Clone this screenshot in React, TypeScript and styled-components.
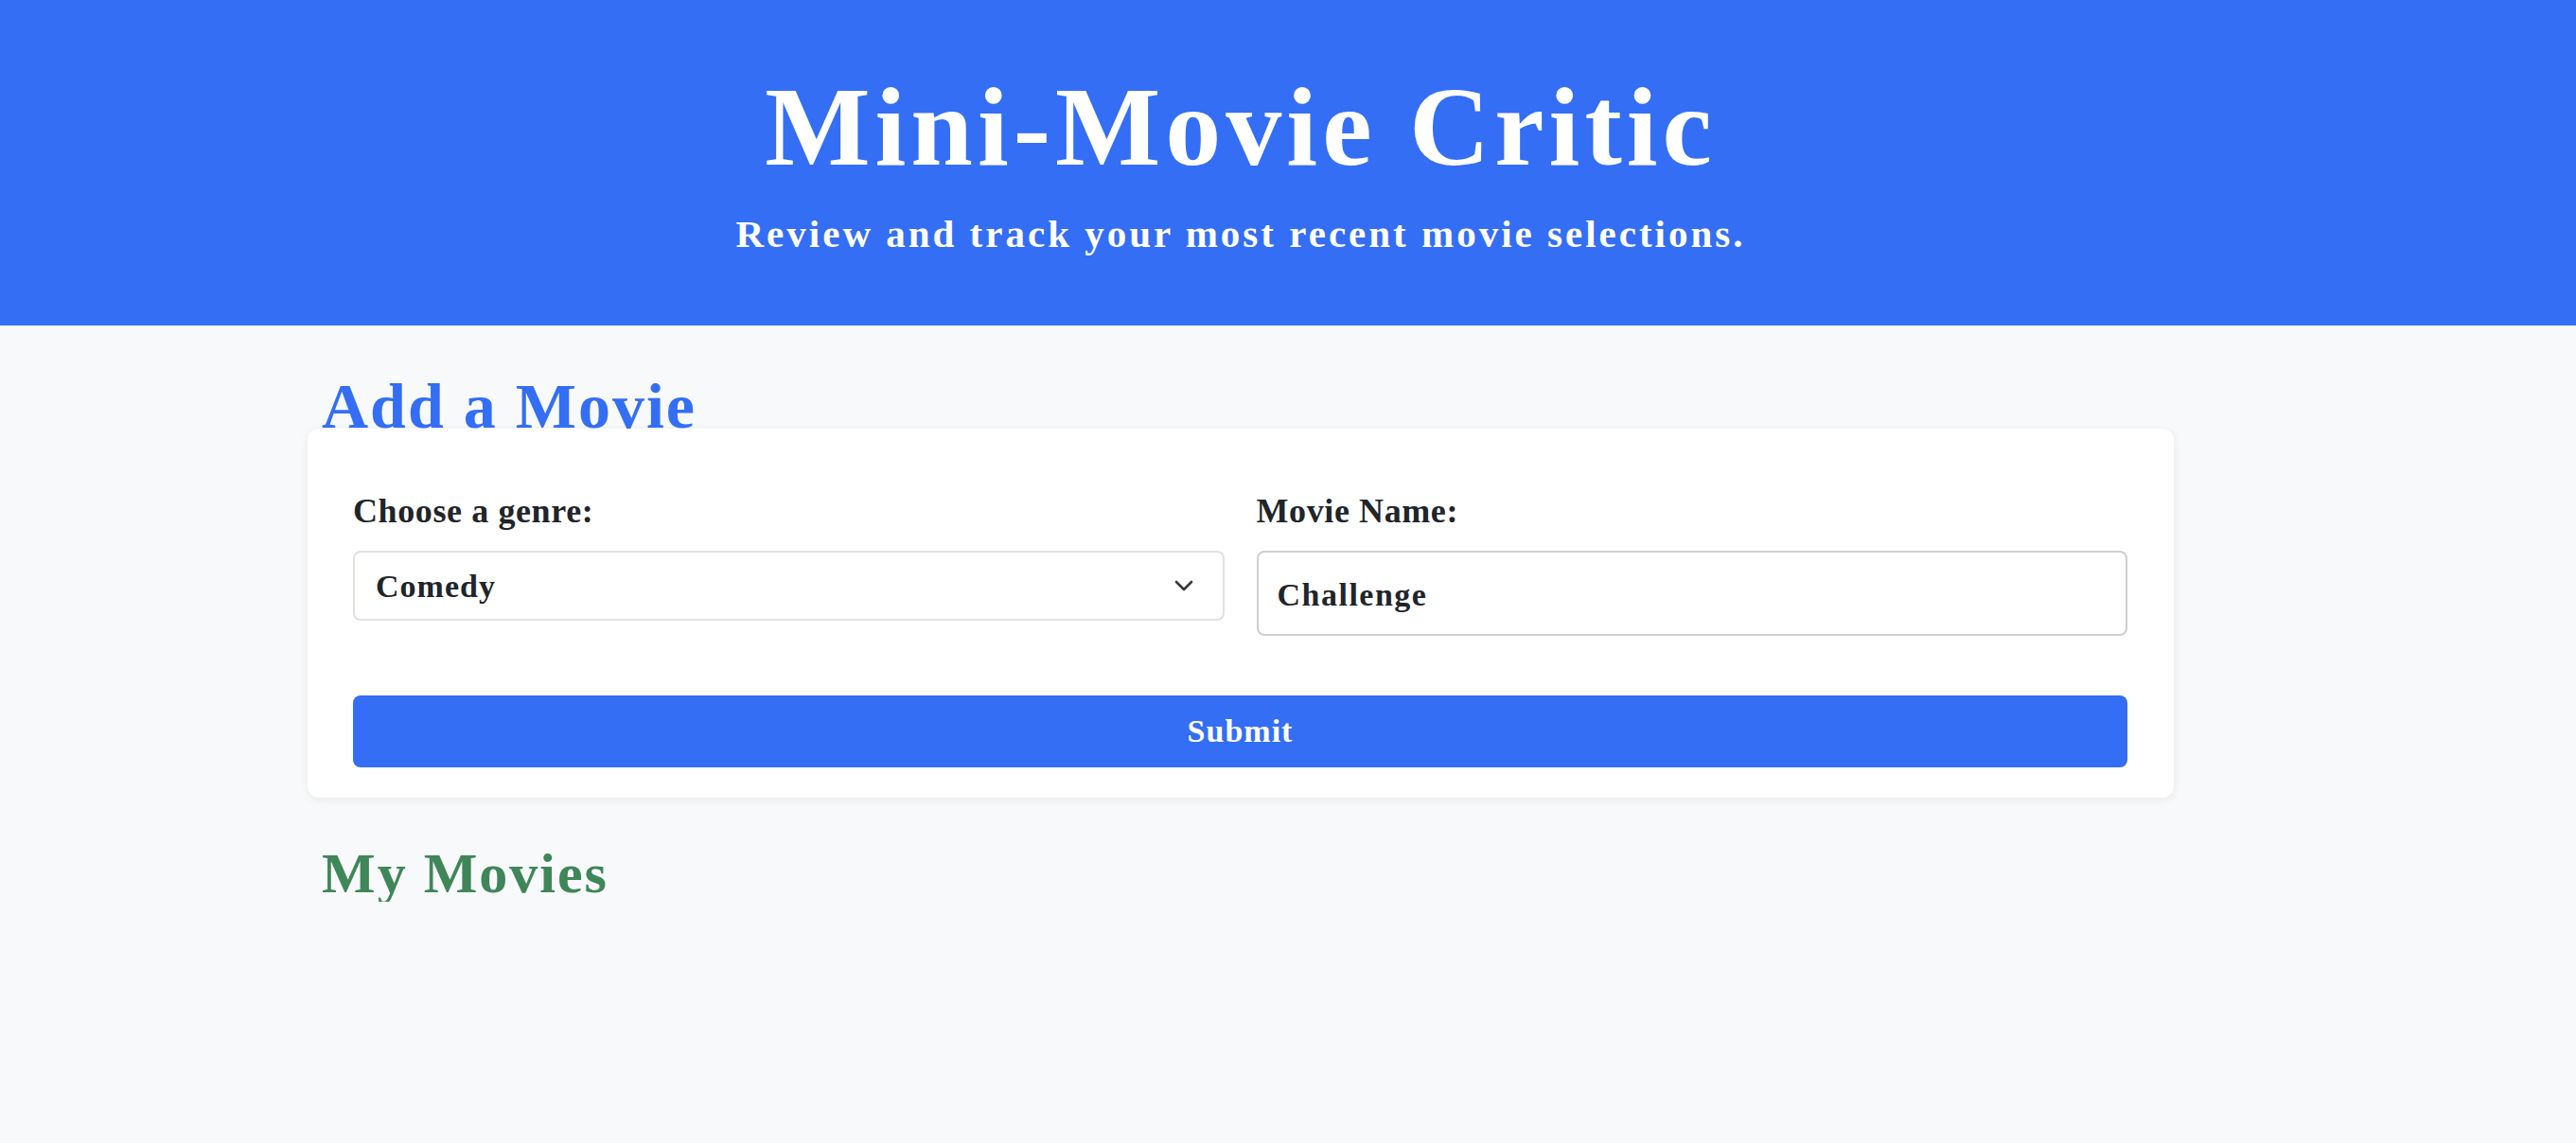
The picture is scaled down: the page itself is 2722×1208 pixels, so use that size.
import React, { useState } from "react";
import styled, { createGlobalStyle } from "styled-components";

const GlobalStyle = createGlobalStyle`
  html, body {
    margin: 0;
    padding: 0;
    background: #f8f9fa;
  }
  body {
    font-family: "Liberation Serif", "Times New Roman", serif;
    color: #212529;
  }
  * { box-sizing: border-box; }
`;

const Header = styled.header`
  background: #336ef5;
  height: 344px;
  padding: 76px 100px 0 0;
  text-align: center;
  color: #ffffff;
`;

const Title = styled.h1`
  margin: 0;
  font-size: 118px;
  line-height: 1;
  font-weight: 700;
  letter-spacing: 5px;
`;

const Subtitle = styled.p`
  margin: 33px 0 0;
  font-size: 41px;
  line-height: 1;
  font-weight: 700;
  letter-spacing: 3px;
`;

const Main = styled.main`
  padding: 0 100px 0 0;
`;

const Container = styled.div`
  width: 1972px;
  margin: 0 auto;
`;

const SectionTitle = styled.h2<{ $color: string; $size: number }>`
  margin: 0;
  padding-left: 15px;
  font-size: ${(p) => p.$size}px;
  line-height: 1;
  font-weight: 700;
  letter-spacing: 2px;
  color: ${(p) => p.$color};
`;

const AddTitle = styled(SectionTitle)`
  margin-top: 51px;
  margin-bottom: -10px;
  position: relative;
  z-index: 1;
`;

const MoviesTitle = styled(SectionTitle)`
  margin-top: 50px;
`;

const Card = styled.form`
  background: #ffffff;
  border-radius: 12px;
  box-shadow: 0 2px 10px rgba(0, 0, 0, 0.07);
  padding: 65px 49px 32px 48px;
`;

const FieldRow = styled.div`
  display: grid;
  grid-template-columns: 1fr 1fr;
  column-gap: 34px;
  align-items: start;
`;

const Field = styled.div`
  display: flex;
  flex-direction: column;
  gap: 20px;
`;

const Label = styled.label`
  font-size: 36px;
  line-height: 44px;
  font-weight: 700;
  letter-spacing: 0.6px;
  color: #212529;
`;

const SelectWrap = styled.div`
  position: relative;
`;

const Select = styled.select`
  appearance: none;
  -webkit-appearance: none;
  width: 100%;
  height: 74px;
  border: 2px solid #dee2e6;
  border-radius: 8px;
  background: #ffffff;
  padding: 0 60px 0 22px;
  font-family: "Liberation Serif", "Times New Roman", serif;
  font-size: 34px;
  font-weight: 700;
  letter-spacing: 1px;
  color: #212529;
  outline: none;
`;

const Chevron = styled.svg`
  position: absolute;
  right: 33px;
  top: 50%;
  transform: translateY(-50%);
  pointer-events: none;
`;

const TextInput = styled.input`
  width: 100%;
  height: 90px;
  border: 2px solid #cfcfcf;
  border-radius: 8px;
  background: #ffffff;
  padding: 3px 20px 0;
  font-family: "Liberation Serif", "Times New Roman", serif;
  font-size: 34px;
  font-weight: 700;
  letter-spacing: 1.5px;
  color: #212529;
  outline: none;
`;

const SubmitButton = styled.button`
  display: block;
  width: 100%;
  height: 76px;
  margin-top: 63px;
  border: none;
  border-radius: 8px;
  background: #336ef5;
  color: #ffffff;
  font-family: "Liberation Serif", "Times New Roman", serif;
  font-size: 34px;
  font-weight: 700;
  letter-spacing: 1px;
  cursor: pointer;
`;

export default function App() {
  const [genre, setGenre] = useState("Comedy");
  const [name, setName] = useState("Challenge");

  return (
    <>
      <GlobalStyle />
      <Header>
        <Title>Mini-Movie Critic</Title>
        <Subtitle>Review and track your most recent movie selections.</Subtitle>
      </Header>
      <Main>
        <Container>
          <AddTitle $color="#336ef5" $size={68}>
            Add a Movie
          </AddTitle>
          <Card onSubmit={(e) => e.preventDefault()}>
            <FieldRow>
              <Field>
                <Label htmlFor="genre">Choose a genre:</Label>
                <SelectWrap>
                  <Select id="genre" value={genre} onChange={(e) => setGenre(e.target.value)}>
                    <option>Comedy</option>
                    <option>Drama</option>
                    <option>Action</option>
                    <option>Horror</option>
                  </Select>
                  <Chevron width="20" height="12" viewBox="0 0 20 12" fill="none">
                    <path d="M2 2l8 8 8-8" stroke="#343a40" strokeWidth="2.6" strokeLinecap="round" strokeLinejoin="round" />
                  </Chevron>
                </SelectWrap>
              </Field>
              <Field>
                <Label htmlFor="movie">Movie Name:</Label>
                <TextInput id="movie" value={name} onChange={(e) => setName(e.target.value)} />
              </Field>
            </FieldRow>
            <SubmitButton type="submit">Submit</SubmitButton>
          </Card>
          <MoviesTitle $color="#3f8659" $size={60}>
            My Movies
          </MoviesTitle>
        </Container>
      </Main>
    </>
  );
}
